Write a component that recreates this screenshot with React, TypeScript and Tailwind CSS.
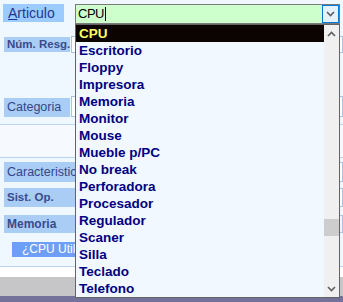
const items = [
  'CPU',
  'Escritorio',
  'Floppy',
  'Impresora',
  'Memoria',
  'Monitor',
  'Mouse',
  'Mueble p/PC',
  'No break',
  'Perforadora',
  'Procesador',
  'Regulador',
  'Scaner',
  'Silla',
  'Teclado',
  'Telefono',
];

function Chevron({ up = false }: { up?: boolean }) {
  return (
    <svg width="9" height="6" viewBox="0 0 9 6" className="block">
      <polyline
        points={up ? '1,5 4.5,1.5 8,5' : '1,1 4.5,4.5 8,1'}
        fill="none"
        stroke="#5f5f5f"
        strokeWidth="1.6"
      />
    </svg>
  );
}

export default function App() {
  return (
    <div className="relative w-[343px] h-[302px] overflow-hidden bg-[#f0f8ff] font-['Liberation_Sans',Arial,sans-serif]">
      <div className="flex flex-col">
        {/* Articulo row with combobox */}
        <div className="flex items-start mt-[4px] pl-[3px] h-[20px]">
          <div className="w-[61px] h-[18px] bg-[#9ccbff] pl-[5px] text-[14px] leading-[18px] text-[#1f3790]">
            <span className="underline">A</span>rticulo
          </div>
          <div className="ml-[11px] flex w-[265px] h-[20px] border border-[#7a7a7a] bg-[#ccffcc]">
            <div className="flex-1 flex items-center pl-[2px] text-[13px] tracking-[-0.5px] text-black">
              CPU
              <span className="ml-[1px] w-px h-[14px] bg-black"></span>
            </div>
            <div className="w-[17px] h-[18px] flex items-center justify-center border border-[#0078d7] bg-[#e5f1fb]">
              <Chevron />
            </div>
          </div>
        </div>

        {/* Núm. Resg. */}
        <div className="flex items-center mt-[12px] pl-[4px] h-[17px]">
          <div className="w-[66px] h-[15px] bg-[#a9cdf5] pl-[3px] text-[11.5px] leading-[15px] font-bold text-[#3a4a8c] whitespace-nowrap overflow-hidden">
            Núm. Resg.
          </div>
          <div className="ml-[1px] flex-1 h-[17px] border border-[#a8c4e4] bg-white"></div>
        </div>

        {/* Categoria */}
        <div className="flex items-stretch mt-[43px] pl-[4px] h-[21px]">
          <div className="mt-[2px] w-[66px] h-[19px] bg-[#a9cdf5] pl-[3px] text-[12.5px] leading-[19px] text-[#34468c]">
            Categoria
          </div>
          <div className="ml-[1px] flex-1 border border-[#a8c4e4] bg-white"></div>
        </div>

        {/* separator band */}
        <div className="mt-[7px] h-[34px] border-y border-[#b7d4f2] bg-[#f6faff]"></div>

        {/* Caracteristic */}
        <div className="flex mt-[4px] pl-[4px] h-[20px]">
          <div className="w-[71px] bg-[#a9cdf5] pl-[3px] text-[12.5px] leading-[20px] text-[#34468c] whitespace-nowrap overflow-hidden">
            Caracteristic
          </div>
          <div className="flex-1 border border-[#a8c4e4] bg-white"></div>
        </div>

        {/* Sist. Op. */}
        <div className="flex mt-[6px] pl-[4px] h-[19px]">
          <div className="w-[71px] bg-[#a9cdf5] pl-[3px] text-[11.5px] leading-[19px] font-bold text-[#3a4a8c]">
            Sist. Op.
          </div>
          <div className="flex-1 border border-[#a8c4e4] bg-white"></div>
        </div>

        {/* Memoria */}
        <div className="flex mt-[8px] pl-[4px] h-[18px]">
          <div className="w-[71px] bg-[#a9cdf5] pl-[3px] text-[12px] leading-[18px] font-bold text-[#3a4a8c]">
            Memoria
          </div>
          <div className="flex-1 border border-[#a8c4e4] bg-[#f6f0ff]"></div>
        </div>

        {/* CPU Utilizada button (clipped by the list) */}
        <div className="flex mt-[9px] pl-[12px] h-[15px]">
          <div className="w-[63px] bg-[#6e9ff7] pl-[10px] text-[12px] leading-[15px] text-white whitespace-nowrap overflow-hidden">
            ¿CPU Utili
          </div>
        </div>

        {/* bottom bands */}
        <div className="mt-[9px] h-[11px] border-t border-[#b7d4f2] bg-white"></div>
        <div className="h-[19px] bg-[#c6c6c8]"></div>
        <div className="h-[6px] bg-[#74729a]"></div>
      </div>

      {/* dropdown list */}
      <div className="absolute left-[75px] top-[24px] w-[265px] h-[274px] flex border border-[#646464] bg-[#f2f8ff]">
        <div className="flex-1 flex flex-col">
          {items.map((item, i) => (
            <div
              key={item}
              className={
                i === 0
                  ? 'h-[17px] pl-[3px] text-[13.5px] leading-[17px] font-bold bg-[#0c0400] text-[#ffff66]'
                  : 'h-[17px] pl-[3px] text-[13.5px] leading-[17px] font-bold text-[#000080]'
              }
            >
              {item}
            </div>
          ))}
        </div>
        <div className="relative w-[15px] bg-[#f0f0f0] flex flex-col items-center justify-between pt-[6px] pb-[5px]">
          <Chevron up />
          <div className="absolute left-0 top-[194px] w-[15px] h-[17px] bg-[#cdcdcd]"></div>
          <Chevron />
        </div>
      </div>
    </div>
  );
}
